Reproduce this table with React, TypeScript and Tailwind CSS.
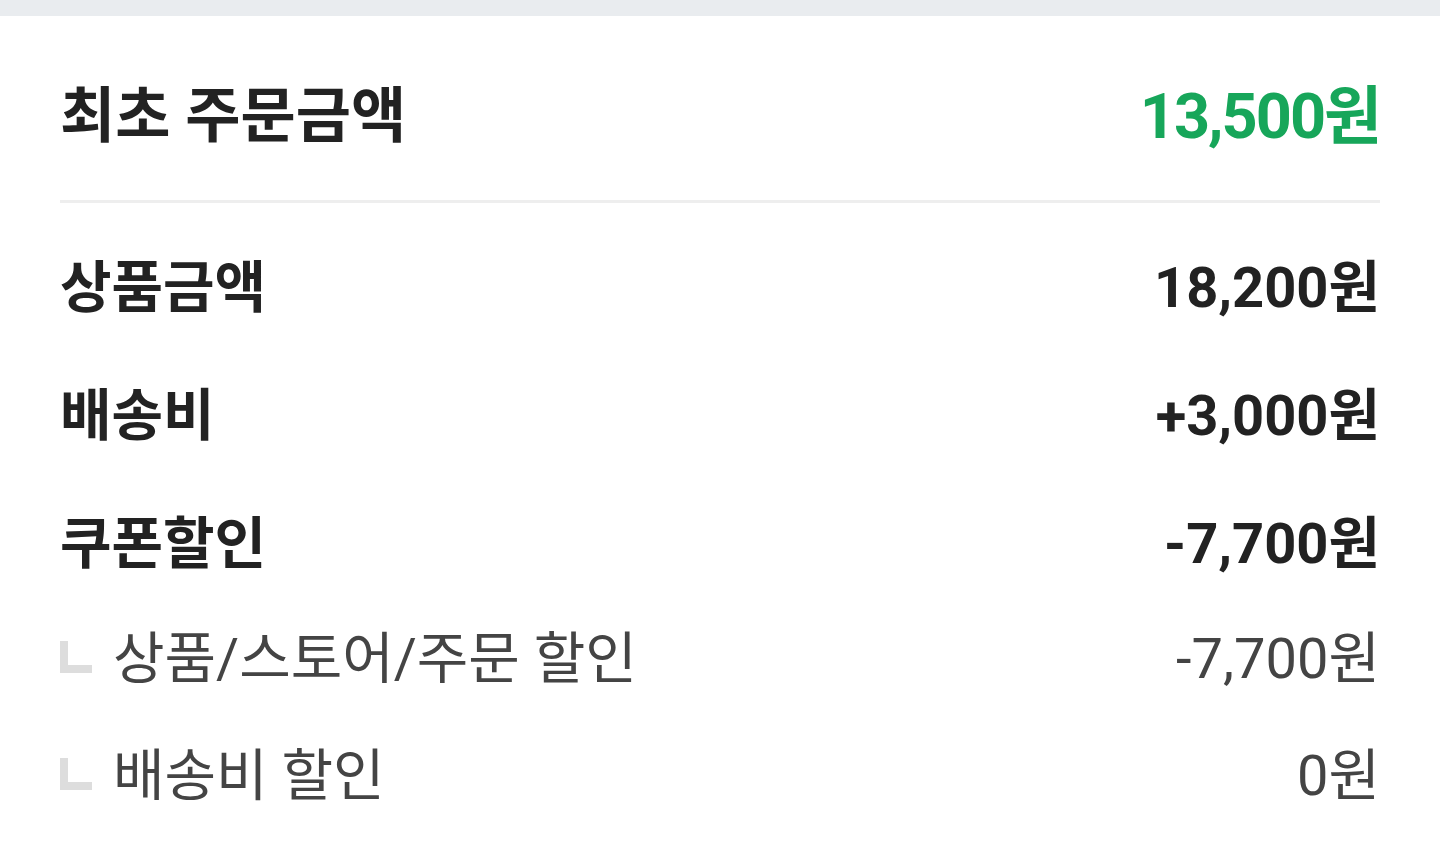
import React from "react";

const font = { fontFamily: '"Roboto", "Noto Sans CJK KR", sans-serif' };

function MainRow({ label, value }: { label: string; value: string }) {
  return (
    <div className="flex h-[128px] items-center justify-between">
      <span className="text-[56px] font-bold text-[#222222]">{label}</span>
      <span className="text-[56px] font-bold text-[#222222]">{value}</span>
    </div>
  );
}

function SubRow({ label, value }: { label: string; value: string }) {
  return (
    <div className="flex h-[117px] items-center justify-between">
      <div className="flex items-center">
        <div className="mb-[4px] h-[32px] w-[32px] border-l-[8px] border-b-[8px] border-[#dddddd]" />
        <span className="ml-[21px] text-[56px] font-normal text-[#444444]">{label}</span>
      </div>
      <span className="text-[56px] font-normal text-[#444444]">{value}</span>
    </div>
  );
}

export default function App() {
  return (
    <div className="min-h-[860px] w-full bg-white" style={font}>
      <div className="h-[16px] bg-[#e9ecef]" />
      <div className="px-[60px]">
        <div className="flex h-[187px] items-center justify-between border-b-[3px] border-[#eeeeee] pt-[18px]">
          <span className="text-[60px] font-bold text-[#222222]">최초 주문금액</span>
          <span className="text-[63px] font-bold text-[#17a65a] tracking-[-2px]">13,500원</span>
        </div>
        <div className="pt-[21px]">
          <MainRow label="상품금액" value="18,200원" />
          <MainRow label="배송비" value="+3,000원" />
          <MainRow label="쿠폰할인" value="-7,700원" />
          <div className="mt-[-8px]">
            <SubRow label="상품/스토어/주문 할인" value="-7,700원" />
            <SubRow label="배송비 할인" value="0원" />
          </div>
        </div>
      </div>
    </div>
  );
}
